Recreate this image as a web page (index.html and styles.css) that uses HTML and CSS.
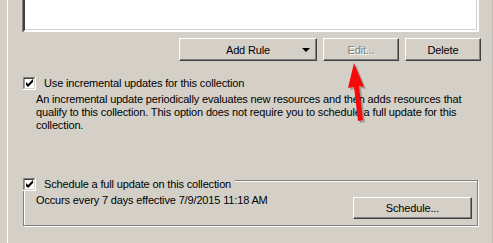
FILE: index.html
```html
<!DOCTYPE html>
<html lang="en">
<head>
    <meta charset="UTF-8">
    <title>Collection Properties</title>
    <link rel="stylesheet" href="styles.css">
</head>
<body>
    <div class="panel">
        <div class="listbox"></div>

        <div class="button-row">
            <button class="btn btn-add">Add Rule <span class="drop"></span></button>
            <button class="btn btn-small" disabled>Edit...</button>
            <button class="btn btn-small">Delete</button>
        </div>

        <div class="check-row incremental">
            <svg class="checkbox" width="13" height="13" viewBox="0 0 13 13">
                <rect x="0" y="0" width="13" height="13" fill="#fff"/>
                <path d="M0 12.5V0.5H12.5" stroke="#808080" fill="none"/>
                <path d="M1 11.5V1.5H11.5" stroke="#404040" fill="none"/>
                <path d="M1 11.5H11.5V1" stroke="#d4d0c8" fill="none"/>
                <path d="M0 12.5H12.5V0" stroke="#fff" fill="none"/>
                <path d="M3 5v3l2 2l5-5v-3l-5 5z" fill="#000"/>
            </svg>
            <span>Use incremental updates for this collection</span>
        </div>
        <p class="desc">An incremental update periodically evaluates new resources and then adds resources that qualify to this collection. This option does not require you to schedule a full update for this collection.</p>

        <div class="group">
            <div class="group-title">
                <svg class="checkbox" width="13" height="13" viewBox="0 0 13 13">
                    <rect x="0" y="0" width="13" height="13" fill="#fff"/>
                    <path d="M0 12.5V0.5H12.5" stroke="#808080" fill="none"/>
                    <path d="M1 11.5V1.5H11.5" stroke="#404040" fill="none"/>
                    <path d="M1 11.5H11.5V1" stroke="#d4d0c8" fill="none"/>
                    <path d="M0 12.5H12.5V0" stroke="#fff" fill="none"/>
                    <path d="M3 5v3l2 2l5-5v-3l-5 5z" fill="#000"/>
                </svg>
                <span>Schedule a full update on this collection</span>
            </div>
            <div class="group-body">
                <span class="occurs">Occurs every 7 days effective 7/9/2015 11:18 AM</span>
                <button class="btn btn-schedule">Schedule...</button>
            </div>
        </div>
    </div>

    <!-- red annotation arrow pointing at the Edit button -->
    <svg class="arrow" width="493" height="243" viewBox="0 0 493 243">
        <polygon points="356,65 366,89 361,88 365,122 360,123 356,89 350,90" fill="#000" opacity="0.25"/>
        <polygon points="354,63 364,87 359,86 363,120 358,121 354,87 348,88" fill="#f50a0a"/>
    </svg>
</body>
</html>
```

FILE: styles.css
```css
* {
    margin: 0;
    padding: 0;
    box-sizing: border-box;
}

body {
    background-color: #d4d0c8;
    color: #000;
    font-family: "Liberation Sans", Arial, sans-serif;
    font-size: 11px;
    line-height: 13px;
    letter-spacing: -0.15px;
    width: 493px;
    height: 243px;
    overflow: hidden;
    position: relative;
}

.panel {
    margin-left: 7px;
    height: 243px;
    border-left: 1px solid #fff;
    border-right: 1px solid #c0bcb4;
    width: 486px;
    padding-left: 15px;
}

.listbox {
    width: 456px;
    height: 32px;
    background-color: #fff;
    border-left: 2px solid #404040;
    border-right: 2px solid #fff;
    border-bottom: 2px solid #fff;
    box-shadow: inset -1px -1px 0 #d4d0c8, -1px 0 0 #808080;
}

.button-row {
    display: flex;
    gap: 6px;
    margin-top: 6px;
    padding-left: 156px;
}

.btn {
    height: 23px;
    background-color: #d4d0c8;
    border: 1px solid;
    border-color: #fff #404040 #404040 #fff;
    box-shadow: inset -1px -1px 0 #808080;
    font-family: inherit;
    font-size: 11px;
    letter-spacing: inherit;
    color: #000;
}

.btn-add {
    width: 138px;
    position: relative;
}

.drop {
    position: absolute;
    right: 6px;
    top: 9px;
    border-left: 4px solid transparent;
    border-right: 4px solid transparent;
    border-top: 4px solid #000;
}

.btn-small {
    width: 76px;
}

.btn:disabled {
    color: #808080;
    text-shadow: 1px 1px 0 #fff;
}

.check-row {
    display: flex;
    align-items: center;
    gap: 8px;
    height: 13px;
}

.checkbox {
    display: block;
    flex-shrink: 0;
}

.incremental {
    margin-top: 16px;
}

.desc {
    margin-top: 3px;
    padding-left: 13px;
    width: 456px;
}

.group {
    margin-top: 48px;
    width: 455px;
    border: 1px solid #808080;
    box-shadow: 1px 1px 0 #fff, inset 1px 1px 0 #fff;
    padding: 0 5px 6px 12px;
}

.group-title {
    display: inline-flex;
    align-items: center;
    gap: 8px;
    height: 13px;
    margin-top: -4px;
    margin-left: -13px;
    padding-right: 4px;
    background-color: #d4d0c8;
}

.group-body {
    display: flex;
    justify-content: space-between;
    align-items: flex-start;
}

.btn-schedule {
    width: 119px;
    height: 22px;
    margin-top: 3px;
}

.arrow {
    position: absolute;
    left: 0;
    top: 0;
    pointer-events: none;
}
```
